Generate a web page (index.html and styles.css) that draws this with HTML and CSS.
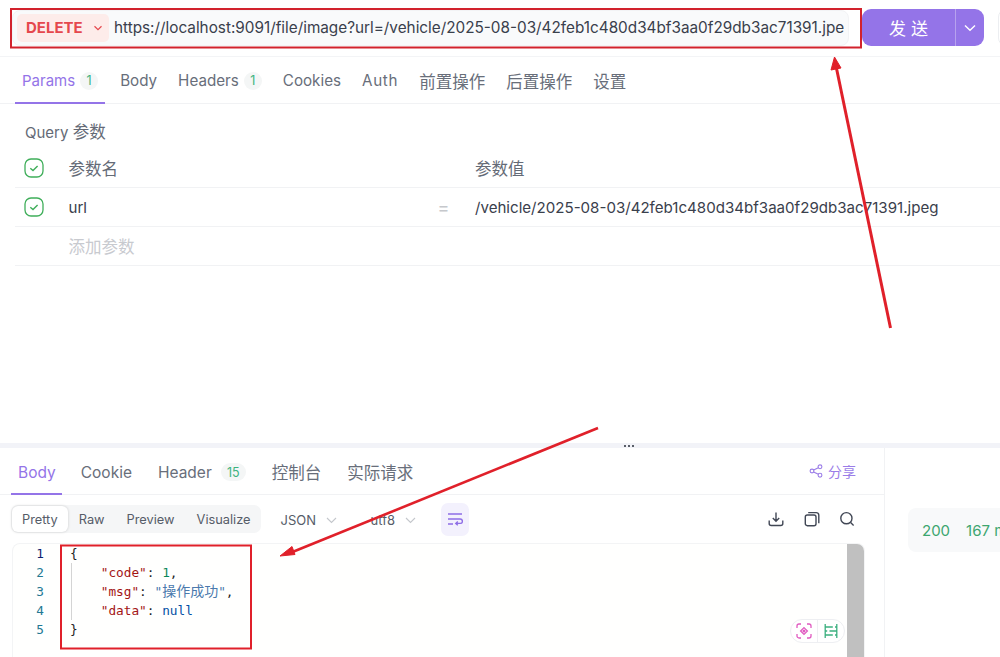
FILE: index.html
```html
<!DOCTYPE html>
<html lang="zh">
<head>
<meta charset="utf-8">
<title>Apifox</title>
<link rel="stylesheet" href="styles.css">
</head>
<body>
<div class="app">
  <header class="topbar">
    <div class="urlbar">
      <div class="method">DELETE
        <svg class="method-caret" width="10" height="6" viewBox="0 0 10 6"><path d="M1.5 1.2 5 4.6l3.5-3.4" fill="none" stroke="#e5484d" stroke-width="1.2"/></svg>
      </div>
      <div class="url">https://localhost:9091/file/image?url=/vehicle/2025-08-03/42feb1c480d34bf3aa0f29db3ac71391.jpe</div>
    </div>
    <div class="send">
      <span class="send-label">发送</span>
      <span class="send-more"><svg width="12" height="8" viewBox="0 0 12 8"><path d="M1 1.500 6 6.300l5-4.800" fill="none" stroke="#fff" stroke-width="1.4"/></svg></span>
    </div>
    <div class="save"></div>
  </header>

  <nav class="tabs req-tabs">
    <span class="tab active">Params <i class="badge">1</i></span>
    <span class="tab">Body</span>
    <span class="tab">Headers <i class="badge">1</i></span>
    <span class="tab">Cookies</span>
    <span class="tab auth">Auth</span>
    <span class="tab cjk">前置操作</span>
    <span class="tab cjk">后置操作</span>
    <span class="tab cjk">设置</span>
  </nav>

  <section class="params">
    <div class="params-title">Query <span class="cjk">参数</span></div>
    <div class="row head">
      <span class="check"><svg width="20" height="20" viewBox="0 0 20 20"><rect x="1" y="1" width="18" height="18" rx="6" fill="none" stroke="#3fae5a" stroke-width="1.3"/><path d="M6.300 10.200 9 12.600l4.600-4.600" fill="none" stroke="#3fae5a" stroke-width="1.4"/></svg></span>
      <span class="name cjk">参数名</span>
      <span class="eq"></span>
      <span class="value cjk">参数值</span>
    </div>
    <div class="row">
      <span class="check"><svg width="20" height="20" viewBox="0 0 20 20"><rect x="1" y="1" width="18" height="18" rx="6" fill="none" stroke="#3fae5a" stroke-width="1.3"/><path d="M6.300 10.200 9 12.600l4.600-4.600" fill="none" stroke="#3fae5a" stroke-width="1.4"/></svg></span>
      <span class="name dark">url</span>
      <span class="eq">=</span>
      <span class="value dark">/vehicle/2025-08-03/42feb1c480d34bf3aa0f29db3ac71391.jpeg</span>
    </div>
    <div class="row">
      <span class="check"></span>
      <span class="name placeholder cjk">添加参数</span>
    </div>
  </section>

  <div class="splitter"><span class="dots"></span></div>

  <section class="response">
    <div class="res-main">
      <nav class="tabs res-tabs">
        <span class="tab active">Body</span>
        <span class="tab">Cookie</span>
        <span class="tab">Header <i class="badge wide">15</i></span>
        <span class="tab cjk">控制台</span>
        <span class="tab cjk">实际请求</span>
        <span class="share">
          <svg width="14" height="14" viewBox="0 0 14 14" fill="none" stroke="#9b7de8" stroke-width="1.1"><circle cx="3" cy="7" r="1.9"/><circle cx="11" cy="2.800" r="1.9"/><circle cx="11" cy="11.200" r="1.9"/><path d="M4.700 6.100 9.300 3.700M4.700 7.900l4.600 2.400"/></svg>
          分享
        </span>
      </nav>
      <div class="res-toolbar">
        <div class="segments">
          <span class="seg on">Pretty</span>
          <span class="seg">Raw</span>
          <span class="seg">Preview</span>
          <span class="seg last">Visualize</span>
        </div>
        <span class="select first">JSON <svg width="11" height="7" viewBox="0 0 11 7"><path d="M1 1l4.500 4.500L10 1" fill="none" stroke="#c4c7cc" stroke-width="1.1"/></svg></span>
        <span class="select">utf8 <svg width="11" height="7" viewBox="0 0 11 7"><path d="M1 1l4.500 4.500L10 1" fill="none" stroke="#c4c7cc" stroke-width="1.1"/></svg></span>
        <span class="wrap"><svg width="16" height="14" viewBox="0 0 16 14" fill="none" stroke="#8f6ee6" stroke-width="1.4"><path d="M1 2h14M1 7h12.200a2 2 0 0 1 0 4.400H9M1 12h5M10.800 9.600 8.800 11.400l2 1.800"/></svg></span>
        <span class="actions">
          <svg width="16" height="16" viewBox="0 0 16 16" fill="none" stroke="#414755" stroke-width="1.4"><path d="M8 1.500v8.500M4.800 7 8 10.200 11.200 7M1.200 9.500V12.500a2 2 0 0 0 2 2h9.600a2 2 0 0 0 2-2V9.500"/></svg>
          <svg width="16" height="16" viewBox="0 0 16 16" fill="none" stroke="#414755" stroke-width="1.4"><rect x="1.300" y="4" width="10.700" height="10.700" rx="2"/><path d="M4.200 1.600h8a2.600 2.600 0 0 1 2.600 2.600v8"/></svg>
          <svg width="16" height="16" viewBox="0 0 16 16" fill="none" stroke="#414755" stroke-width="1.4"><circle cx="7.400" cy="7.200" r="5.600"/><path d="m11.600 11.400 3 3"/></svg>
        </span>
      </div>
      <div class="editor">
        <div class="gutter"><span class="cur">1</span><span>2</span><span>3</span><span>4</span><span>5</span></div>
        <div class="code">
          <span class="guide"></span>
          <div class="line"><span class="p">{</span></div>
          <div class="line">    <span class="k">"code"</span><span class="p">: </span><span class="n">1</span><span class="p">,</span></div>
          <div class="line">    <span class="k">"msg"</span><span class="p">: </span><span class="s">"<span class="zh">操作成功</span>"</span><span class="p">,</span></div>
          <div class="line">    <span class="k">"data"</span><span class="p">: </span><span class="b">null</span></div>
          <div class="line"><span class="p">}</span></div>
        </div>
        <div class="scrollbar"></div>
        <div class="float-tools">
          <span class="ft"><svg width="16" height="16" viewBox="0 0 16 16" fill="none" stroke="#e05ac0" stroke-width="1.3"><path d="M1 5V3a2 2 0 0 1 2-2h2M11 1h2a2 2 0 0 1 2 2v2M15 11v2a2 2 0 0 1-2 2h-2M5 15H3a2 2 0 0 1-2-2v-2"/><path d="m8 4.600 3.400 3.400L8 11.400 4.600 8z"/><circle cx="8" cy="8" r=".9" fill="#e05ac0"/></svg></span>
          <span class="ft"><svg width="14" height="14" viewBox="0 0 14 14" fill="none" stroke="#3bb07f" stroke-width="1.3"><path d="M1.200 0v14M12.800 0v14M1.200 3h7.600M11 3h1.800M1.200 7h2M5.500 7h7.300M1.200 11h7.600M11 11h1.800"/></svg></span>
        </div>
      </div>
    </div>
    <aside class="res-side">
      <div class="side-head"></div>
      <div class="status"><span>200</span><span>167 ms</span></div>
    </aside>
  </section>
</div>

<svg class="notes" width="1000" height="657" viewBox="0 0 1000 657" fill="none">
  <rect x="11" y="9" width="850" height="38.500" stroke="#d2222d" stroke-width="2"/>
  <rect x="61" y="545.500" width="190" height="103" stroke="#e0202a" stroke-width="2"/>
  <path d="M890.500 328 836 66" stroke="#e0202a" stroke-width="3"/>
  <path d="m831 70 3.500-13 6.500 11z" fill="#e0202a" stroke="#e0202a"/>
  <path d="M598 428 290 553" stroke="#e0202a" stroke-width="2.600"/>
  <path d="m280 556 12-9.500 3 8z" fill="#e0202a" stroke="#e0202a"/>
</svg>
</body>
</html>
```
FILE: styles.css
```css
* { box-sizing: border-box; }
html, body { margin: 0; height: 100%; overflow: hidden; background: #fff; }
body {
  font-family: Inter, "Noto Sans CJK SC", sans-serif;
  font-size: 15px;
  color: #646a76;
}
.app { width: 1000px; height: 657px; display: flex; flex-direction: column; position: relative; overflow: hidden; }
.cjk { font-size: 16.500px; }

.topbar { height: 57px; flex: none; display: flex; align-items: center; padding: 0 0 1px 12px; border-bottom: 1px solid #f3f4f6; }
.urlbar { width: 837px; margin-right: 13px; height: 36px; display: flex; align-items: center; gap: 5px; padding: 0 3px 0 4px; background: #f9fafb; border: 1px solid #f2f3f5; border-radius: 8px; overflow: hidden; flex: none; }
.method { flex: none; width: 92px; height: 28px; background: #fdecea; border-radius: 5px; color: #e5484d; font-weight: 700; font-size: 15px; display: flex; align-items: center; gap: 10px; padding-left: 9px; }
.url { white-space: nowrap; font-size: 15.300px; color: #3a404c; overflow: hidden; }
.send { flex: none; width: 122px; height: 37px; background: #9474e8; border-radius: 9px; color: #fff; display: flex; align-items: center; }
.send-label { flex: 1; text-align: center; font-size: 17px; letter-spacing: 5px; padding-left: 5px; }
.send-more { flex: none; width: 29px; height: 100%; border-left: 1px solid #b7a2ee; display: flex; align-items: center; justify-content: center; }
.save { margin-left: 14px; flex: none; width: 40px; height: 37px; border: 1px solid #eceef1; border-radius: 8px; }

.tabs { display: flex; align-items: center; flex: none; border-bottom: 1px solid #f1f2f4; }
.req-tabs { height: 47px; padding-left: 15px; gap: 21px; }
.tab { height: 100%; display: flex; align-items: center; gap: 5px; white-space: nowrap; position: relative; font-size: 15.200px; color: #686e7a; padding-top: 1px; }
.tab.cjk { font-size: 16.500px; }
.tab.auth { letter-spacing: .7px; }
.req-tabs .tab.active { padding: 1px 7px 0; margin-right: -6px; font-size: 15px; }
.tab.active { color: #9474e8; }
.tab.active::after { content: ""; position: absolute; left: 0; right: 0; bottom: -1px; height: 2px; background: #9474e8; }
.badge { font-style: normal; font-size: 12.500px; color: #3db37f; background: #f4f6f6; border-radius: 9px; min-width: 18px; height: 18px; padding: 0 4px; display: inline-flex; align-items: center; justify-content: center; }
.badge.wide { width: 25px; margin-left: 4px; }

.params { flex: 1; padding: 17px 0 0 15px; }
.params-title { padding-left: 10px; font-size: 15px; line-height: 22px; margin-bottom: 5px; }
.row { height: 39px; display: flex; align-items: center; border-bottom: 1px solid #f1f2f4; font-size: 15.500px; }
.check { width: 53.500px; padding-left: 9px; display: flex; }
.name { width: 364px; }
.eq { width: 42.500px; padding-left: 5px; color: #c6c8cc; font-size: 18px; }
.dark { color: #3a404c; font-size: 15.100px; padding-top: 1px; }
.placeholder { color: #c8cacf; }

.splitter { height: 5px; flex: none; background: #f2f3f8; display: flex; align-items: center; padding-left: 623px; }
.dots { width: 12px; height: 2px; background: radial-gradient(circle, #5a5f69 1px, transparent 1.200px) 0 0 / 4px 2px repeat-x; }

.response { height: 209px; flex: none; display: flex; }
.res-main { width: 885px; flex: none; display: flex; flex-direction: column; border-right: 1px solid #f1f2f4; }
.res-tabs { height: 47px; padding: 2px 28px 0 11px; gap: 26px; }
.res-tabs .tab { padding-top: 0; font-size: 15.500px; }
.res-tabs .tab.cjk { font-size: 16.500px; }
.res-tabs .tab.active { padding: 0 6px 0 7px; margin-right: -7px; }
.share { margin-left: auto; color: #9b7de8; font-size: 14px; display: flex; align-items: center; gap: 5px; margin-top: -2px; }
.res-toolbar { height: 48px; flex: none; display: flex; align-items: center; padding: 0 29px 0 11px; }
.segments { display: flex; height: 28px; background: #f5f6f7; border-radius: 7px; align-items: center; font-size: 12.800px; }
.seg { height: 26px; padding: 2px 11px 0; color: #565c68; line-height: 24px; }
.seg.last { padding-right: 10px; }
.seg.on { background: #fff; border-radius: 6px; box-shadow: 0 0 3px rgba(0,0,0,.18); padding: 2px 10px 0; margin-left: 1px; }
.select { font-size: 13px; color: #565c68; display: flex; align-items: center; gap: 10px; width: 70px; padding-top: 2px; }
.select.first { margin-left: 20px; width: 90px; }
.wrap { width: 28px; height: 33px; background: #f3f1fd; border-radius: 7px; display: flex; align-items: center; justify-content: center; }
.actions { margin-left: auto; display: flex; gap: 19.500px; }
.editor { flex: 1; margin: 0 19px 0 12px; display: flex; position: relative; border: 1px solid #f3f4f5; border-bottom: 0; border-radius: 8px 8px 0 0; background: #fffffe; overflow: hidden; font-family: "DejaVu Sans Mono", "Noto Sans CJK SC", monospace; font-size: 12.750px; line-height: 19px; }
.gutter { width: 31px; text-align: right; color: #237893; display: flex; flex-direction: column; }
.gutter .cur { color: #0b216f; }
.code { margin-left: 26px; color: #333; position: relative; }
.line { height: 19px; white-space: pre; }
.zh { font-size: 14px; }
.guide { position: absolute; left: 1px; top: 19px; height: 57px; border-left: 1px solid #d4d4d4; }
.k { color: #a31515; }
.p { color: #222; }
.n { color: #098658; }
.s { color: #4a79ad; }
.b { color: #0451a5; }
.scrollbar { position: absolute; right: 0; top: 0; bottom: 0; width: 17px; background: #c0c0c0; }
.float-tools { position: absolute; right: 19px; top: 75px; width: 55px; height: 24px; display: flex; background: #fff; border: 1px solid #eeeff2; border-radius: 12px; }
.ft { flex: 1; display: flex; align-items: center; justify-content: center; }
.ft + .ft { border-left: 1px solid #eeeff2; }

.res-side { flex: 1; display: flex; flex-direction: column; overflow: hidden; }
.side-head { height: 48px; flex: none; }
.status { margin: 12px 0 0 23px; height: 44px; width: 140px; flex: none; background: #f8f9fa; border-radius: 8px; display: flex; align-items: center; gap: 16px; padding-left: 14px; color: #3da66f; font-size: 15px; white-space: nowrap; }

.notes { position: absolute; left: 0; top: 0; pointer-events: none; }
```
